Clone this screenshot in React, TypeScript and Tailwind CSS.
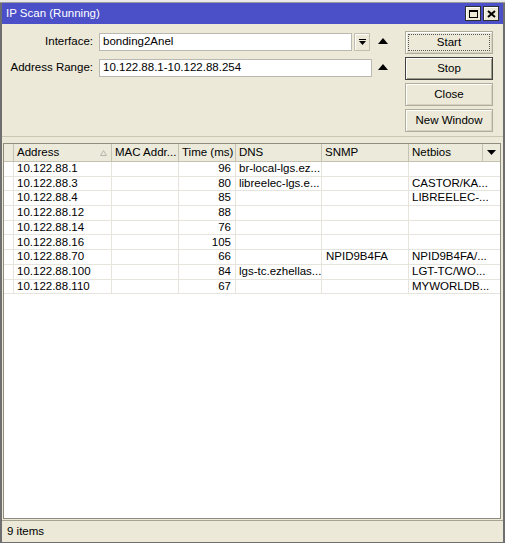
import React from 'react';

type Row = { addr: string; mac: string; time: string; dns: string; snmp: string; netbios: string };

const rows: Row[] = [
  { addr: '10.122.88.1', mac: '', time: '96', dns: 'br-local-lgs.ez...', snmp: '', netbios: '' },
  { addr: '10.122.88.3', mac: '', time: '80', dns: 'libreelec-lgs.e...', snmp: '', netbios: 'CASTOR/KA...' },
  { addr: '10.122.88.4', mac: '', time: '85', dns: '', snmp: '', netbios: 'LIBREELEC-...' },
  { addr: '10.122.88.12', mac: '', time: '88', dns: '', snmp: '', netbios: '' },
  { addr: '10.122.88.14', mac: '', time: '76', dns: '', snmp: '', netbios: '' },
  { addr: '10.122.88.16', mac: '', time: '105', dns: '', snmp: '', netbios: '' },
  { addr: '10.122.88.70', mac: '', time: '66', dns: '', snmp: 'NPID9B4FA', netbios: 'NPID9B4FA/...' },
  { addr: '10.122.88.100', mac: '', time: '84', dns: 'lgs-tc.ezhellas...', snmp: '', netbios: 'LGT-TC/WO...' },
  { addr: '10.122.88.110', mac: '', time: '67', dns: '', snmp: '', netbios: 'MYWORLDB...' },
];

// small black "up" triangle next to the inputs
function UpArrow() {
  return (
    <svg width="10" height="6" viewBox="0 0 10 6" className="block">
      <polygon points="5,0 10,6 0,6" fill="#000" />
    </svg>
  );
}

function WinButton({ label, focus, isDefault }: { label: string; focus?: boolean; isDefault?: boolean }) {
  return (
    <div
      className={
        'h-[23px] w-[88px] flex items-center justify-center bg-[#ece9d8] border ' +
        (isDefault ? 'border-[#404040] shadow-[inset_1px_1px_0_#fff,inset_-1px_-1px_0_#9d9a8a]' : 'border-[#b0ad9c] shadow-[inset_1px_1px_0_#fff,inset_-1px_-1px_0_#d6d2c2]')
      }
    >
      {focus ? (
        <div className="w-[82px] h-[17px] border border-dotted border-[#555] flex items-center justify-center">{label}</div>
      ) : (
        label
      )}
    </div>
  );
}

export default function App() {
  return (
    <div className="w-[505px] h-[543px] flex flex-col bg-[#ece9d8] text-black text-[11.5px] leading-none font-['Liberation_Sans',Arial,sans-serif] overflow-hidden">
      {/* pedaço da janela de trás */}
      <div className="h-[3px] bg-[#e9e9e9] border-b border-[#9a9a9a]" />

      <div className="flex-1 flex flex-col border-l-2 border-r-2 border-b border-[#6f6f6f] min-h-0">
        {/* Barra de título */}
        <div className="h-[21px] bg-[#4b50c9] flex items-center justify-between pl-[4px] pr-[4px]">
          <span className="text-white">IP Scan (Running)</span>
          <div className="flex gap-[2px]">
            <div className="w-[16px] h-[15px] bg-[#ece9d8] border border-[#303030] shadow-[inset_1px_1px_0_#fff] flex items-center justify-center">
              <div className="w-[9px] h-[8px] border border-black border-t-2" />
            </div>
            <div className="w-[16px] h-[15px] bg-[#ece9d8] border border-[#303030] shadow-[inset_1px_1px_0_#fff] flex items-center justify-center">
              <svg width="9" height="8" viewBox="0 0 9 8">
                <path d="M1 1 L8 7 M8 1 L1 7" stroke="#000" strokeWidth="2" />
              </svg>
            </div>
          </div>
        </div>

        {/* Formulário */}
        <div className="h-[113px] flex border-b border-[#c9c6b4]">
          <div className="flex-1 flex flex-col gap-[8px] pt-[9px]">
            <div className="flex items-center h-[18px]">
              <span className="w-[91px] text-right">Interface:</span>
              <div className="ml-[6px] w-[253px] h-[18px] bg-white border border-[#b9b9b1] flex items-center pl-[3px]">bonding2Anel</div>
              <div className="ml-[2px] w-[16px] h-[18px] bg-[#ece9d8] border border-[#c2bfae] shadow-[inset_1px_1px_0_#fff] flex items-center justify-center">
                <svg width="7" height="7" viewBox="0 0 7 7">
                  <rect x="0" y="0" width="7" height="1" fill="#000" />
                  <polygon points="0,2 7,2 3.5,6" fill="#000" />
                </svg>
              </div>
              <div className="ml-[8px] -mt-[3px]">
                <UpArrow />
              </div>
            </div>
            <div className="flex items-center h-[18px]">
              <span className="w-[91px] text-right">Address Range:</span>
              <div className="ml-[6px] w-[273px] h-[18px] bg-white border border-[#b9b9b1] flex items-center pl-[3px]">10.122.88.1-10.122.88.254</div>
              <div className="ml-[6px] -mt-[3px]">
                <UpArrow />
              </div>
            </div>
          </div>
          <div className="flex flex-col gap-[3px] pt-[7px] pr-[10px]">
            <WinButton label="Start" focus />
            <WinButton label="Stop" isDefault />
            <WinButton label="Close" />
            <WinButton label="New Window" />
          </div>
        </div>

        {/* Tabela */}
        <div className="flex-1 ml-[1px] mr-[2px] mt-[6px] bg-white border border-[#8f8d80] flex flex-col min-h-0">
          <div className="grid grid-cols-[10px_98px_67px_57px_86px_87px_74px_17px] h-[18px] bg-[#ebeadb] border-b border-[#c5c2b2]">
            <div className="border-r border-[#c5c2b2]" />
            <div className="border-r border-[#c5c2b2] flex items-center justify-between pl-[3px] pr-[4px]">
              <span>Address</span>
              <svg width="7" height="6" viewBox="0 0 7 6">
                <polygon points="3.5,0.5 6.5,5.5 0.5,5.5" fill="none" stroke="#b8b6aa" strokeWidth="1" />
              </svg>
            </div>
            <div className="border-r border-[#c5c2b2] flex items-center pl-[3px]">MAC Addr...</div>
            <div className="border-r border-[#c5c2b2] flex items-center pl-[3px]">Time (ms)</div>
            <div className="border-r border-[#c5c2b2] flex items-center pl-[3px]">DNS</div>
            <div className="border-r border-[#c5c2b2] flex items-center pl-[3px]">SNMP</div>
            <div className="border-r border-[#c5c2b2] flex items-center pl-[3px]">Netbios</div>
            <div className="flex items-center justify-center">
              <svg width="9" height="5" viewBox="0 0 9 5">
                <polygon points="0,0 9,0 4.5,5" fill="#000" />
              </svg>
            </div>
          </div>

          {rows.map((r) => (
            <div
              key={r.addr}
              className="grid grid-cols-[10px_98px_67px_57px_86px_87px_91px] h-[14.7px] border-b border-[#e6e4dc]"
            >
              <div className="border-r border-[#e6e4dc]" />
              <div className="border-r border-[#e6e4dc] pl-[3px] flex items-center">{r.addr}</div>
              <div className="border-r border-[#e6e4dc] pl-[3px] flex items-center">{r.mac}</div>
              <div className="border-r border-[#e6e4dc] pr-[4px] flex items-center justify-end">{r.time}</div>
              <div className="border-r border-[#e6e4dc] pl-[3px] flex items-center whitespace-nowrap overflow-hidden">{r.dns}</div>
              <div className="border-r border-[#e6e4dc] pl-[4px] flex items-center">{r.snmp}</div>
              <div className="pl-[3px] flex items-center whitespace-nowrap">{r.netbios}</div>
            </div>
          ))}
        </div>

        {/* Barra de status */}
        <div className="h-[22px] mt-[1px] border-t border-[#a6a391] flex items-center pl-[5px]">9 items</div>
      </div>
    </div>
  );
}
